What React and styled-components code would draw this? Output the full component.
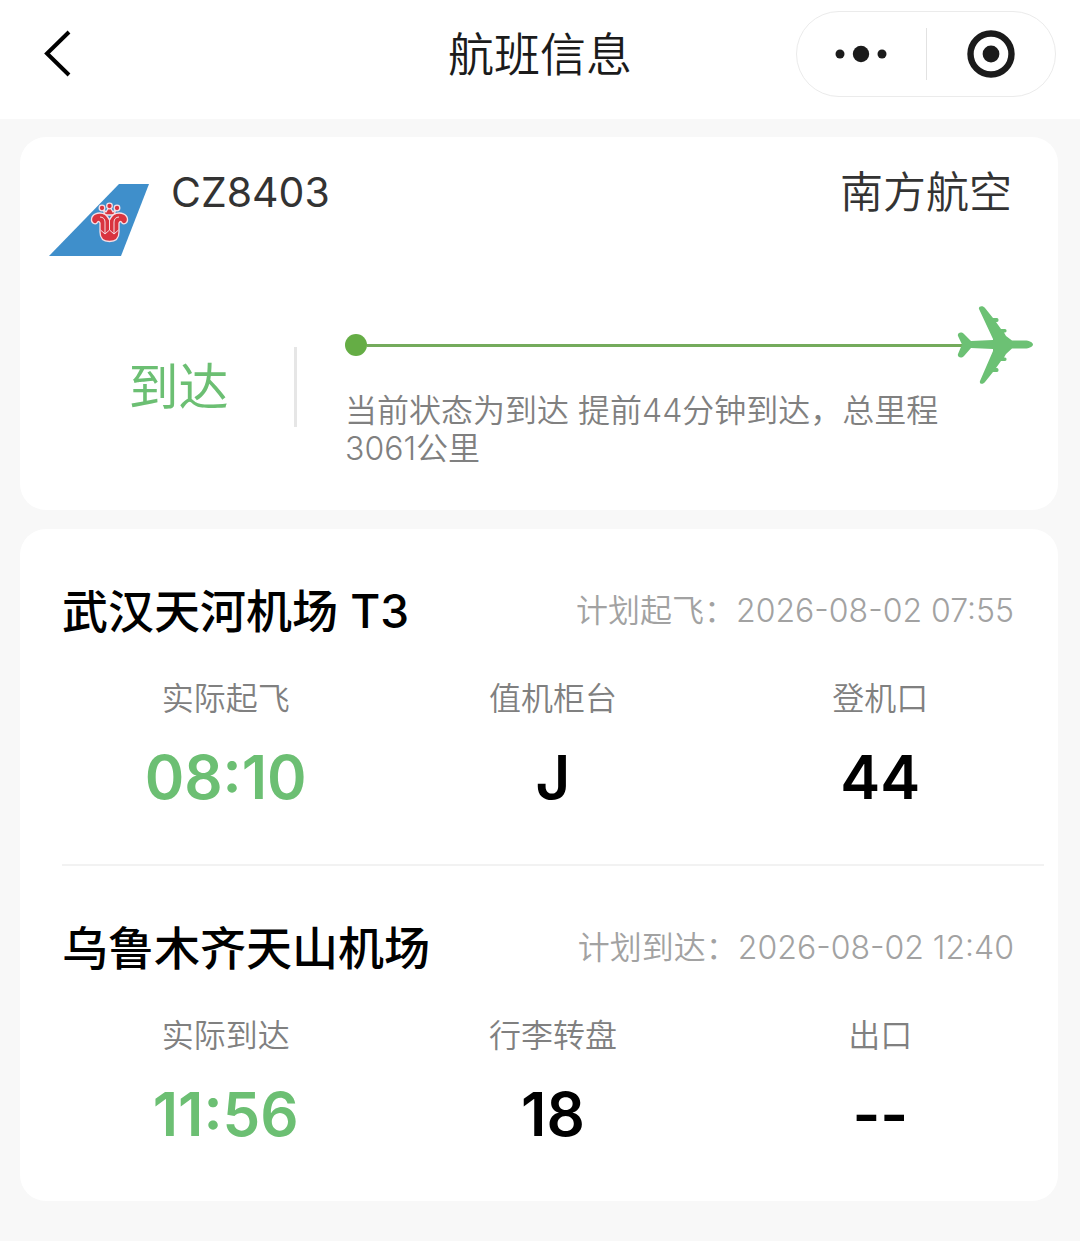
import styled, { createGlobalStyle } from "styled-components";

const trechos = [
    {
        aeroporto: "武汉天河机场 T3",
        plano: "计划起飞：",
        horario: "2026-08-02 07:55",
        dados: [
            { nome: "实际起飞", valor: "08:10", verde: true },
            { nome: "值机柜台", valor: "J" },
            { nome: "登机口", valor: "44" },
        ],
    },
    {
        aeroporto: "乌鲁木齐天山机场",
        plano: "计划到达：",
        horario: "2026-08-02 12:40",
        dados: [
            { nome: "实际到达", valor: "11:56", verde: true },
            { nome: "行李转盘", valor: "18" },
            { nome: "出口", valor: "--" },
        ],
    },
];

export default function App() {
    return (
        <>
            <GlobalStyle />
            <Header>
                <Voltar aria-label="返回">
                    <svg width="30" height="50" viewBox="0 0 30 50" fill="none" stroke="#000" strokeWidth="4">
                        <path d="M27 3L5 24.500L27 46" />
                    </svg>
                </Voltar>
                <Titulo>航班信息</Titulo>
                <Capsula>
                    <BotaoCapsula aria-label="更多">
                        <svg width="52" height="18" viewBox="0 0 52 18" fill="#1b1b1b">
                            <circle cx="5" cy="9" r="4.500" />
                            <circle cx="26" cy="9" r="8.200" />
                            <circle cx="47" cy="9" r="4.500" />
                        </svg>
                    </BotaoCapsula>
                    <Traco />
                    <BotaoCapsula aria-label="关闭">
                        <svg width="48" height="48" viewBox="0 0 48 48">
                            <circle cx="24" cy="24" r="20.500" fill="none" stroke="#1b1b1b" strokeWidth="6.400" />
                            <circle cx="24" cy="24" r="8.400" fill="#1b1b1b" />
                        </svg>
                    </BotaoCapsula>
                </Capsula>
            </Header>
            <Conteudo>
                <CartaoVoo>
                    <Companhia>
                        <Logo />
                        <Numero>CZ8403</Numero>
                        <Nome>南方航空</Nome>
                    </Companhia>
                    <Situacao>
                        <Estado>到达</Estado>
                        <Progresso>
                            <Rota>
                                <Ponto />
                                <Linha />
                                <Aviao />
                            </Rota>
                            <Resumo>当前状态为到达 提前44分钟到达，总里程3061公里</Resumo>
                        </Progresso>
                    </Situacao>
                </CartaoVoo>
                <CartaoTrechos>
                    {trechos.map((t) => (
                        <Trecho key={t.aeroporto}>
                            <Topo>
                                <Aeroporto>{t.aeroporto}</Aeroporto>
                                <Plano>{t.plano}<time>{t.horario}</time></Plano>
                            </Topo>
                            <Dados>
                                {t.dados.map((d) => (
                                    <Dado key={d.nome}>
                                        <Rotulo>{d.nome}</Rotulo>
                                        <Valor $verde={d.verde}>{d.valor}</Valor>
                                    </Dado>
                                ))}
                            </Dados>
                        </Trecho>
                    ))}
                </CartaoTrechos>
            </Conteudo>
        </>
    );
}

function Logo() {
    return (
        <svg width="100" height="74" viewBox="0 0 100 74" role="img" aria-label="南方航空">
            <path d="M70 1H100L72 73H0Z" fill="#3f8fcb" />
            <g fill="#d9343f" stroke="#f6dfe6" strokeWidth="1.300" strokeLinejoin="round">
                <path d="M54 26L56 32H65L67 26L64 29L60.500 23L57 29Z" />
                <circle cx="53" cy="25" r="2.800" />
                <circle cx="60.500" cy="23" r="2.800" />
                <circle cx="68" cy="25" r="2.800" />
                <path d="M51 49V40C50 38 49 38 48 40C46 42 42 40 42.500 36C43 31 49 29 54 30.500C57 31 59 34 60.500 37C62 34 64 31 67 30.500C72 29 78 31 78.500 36C79 40 75 42 73 40C72 38 71 38 70 40V49C70 55 67 58.500 60.500 58.500C54 58.500 51 55 51 49Z" />
                <path d="M51.500 47L56 51L60.500 47L65 51L69.500 47M56 50V39C56 36 54 34 51 34M60.500 47V37M65 50V39C65 36 67 34 70 34" fill="none" strokeWidth="1" />
            </g>
        </svg>
    );
}

function Aviao() {
    return (
        <svg width="78" height="80" viewBox="0 0 78 80" fill="#6cc174" aria-hidden="true">
            <path d="M23 4C22 1 27 0 29 3L37 13H41C43 13 43 17 41 17H40L45 24H49C51 24 51 27.500 49 27.500H48L50 31L56 35.500H69C73 35.500 77 37.500 77 39.500C77 41.500 73 43.500 69 43.500H56L50 49L48 52.500H49C51 52.500 51 56 49 56H45L40 63H41C43 63 43 67 41 67H37L29 77C27 80 23 79 24 76L37 46V44L15 43L8 51C5 54 1 52 2 49L6 39.500L2 31C1 28 5 26 8 29L15 36L37 35V34Z" />
        </svg>
    );
}

const GlobalStyle = createGlobalStyle`
    * {
        box-sizing: border-box;
        margin: 0;
        padding: 0;
    }

    body {
        background-color: #f8f8f8;
        color: #000;
        font-family: Inter, "Noto Sans CJK SC", sans-serif;
    }

    button {
        border: none;
        background: none;
        cursor: pointer;
    }

    svg {
        display: block;
        flex-shrink: 0;
    }
`

const Header = styled.header`
    display: grid;
    grid-template-columns: 1fr auto 1fr;
    align-items: center;
    height: 119px;
    padding: 0 24px 12px 42px;
    background-color: #fff;
`

const Voltar = styled.button`
    justify-self: start;
`

const Titulo = styled.h1`
    padding-right: 18px;
    font-size: 46px;
    line-height: 64px;
    font-weight: 350;
    color: #1b1b1b;
`

const Capsula = styled.div`
    display: flex;
    align-items: center;
    justify-self: end;
    width: 260px;
    height: 86px;
    border: 1px solid #ebebeb;
    border-radius: 43px;
`

const BotaoCapsula = styled.button`
    display: flex;
    flex: 1;
    align-items: center;
    justify-content: center;
    height: 100%;
`

const Traco = styled.span`
    width: 1px;
    height: 52px;
    background-color: #e2e2e2;
`

const Conteudo = styled.main`
    display: flex;
    flex-direction: column;
    gap: 19px;
    padding: 18px 22px 40px 20px;
`

const Cartao = styled.section`
    border-radius: 26px;
    background-color: #fff;
`

const CartaoVoo = styled(Cartao)`
    padding: 24px 24px 42px 29px;
`

const Companhia = styled.div`
    display: flex;
    align-items: flex-start;
    gap: 22px;
    padding-right: 22px;

    svg {
        margin-top: 22px;
    }
`

const Numero = styled.h2`
    font-size: 41px;
    line-height: 62px;
    font-weight: 400;
    color: #333;
`

const Nome = styled.p`
    margin-left: auto;
    font-size: 43px;
    line-height: 62px;
    font-weight: 350;
    color: #333;
`

const Situacao = styled.div`
    display: flex;
    align-items: center;
    margin-top: 48px;
`

const Estado = styled.p`
    width: 248px;
    padding-left: 14px;
    border-right: 3px solid #e6e6e6;
    font-size: 50px;
    line-height: 80px;
    text-align: center;
    color: #6cbf73;
`

const Progresso = styled.div`
    flex: 1;
    padding-left: 48px;
`

const Rota = styled.div`
    display: flex;
    align-items: center;
`

const Ponto = styled.span`
    width: 22px;
    height: 22px;
    border-radius: 50%;
    background-color: #65ad45;
`

const Linha = styled.span`
    flex: 1;
    height: 3px;
    margin-right: -6px;
    background-color: #74ab5c;
`

const Resumo = styled.p`
    padding: 7px 60px 0 0;
    font-size: 32px;
    line-height: 38px;
    font-weight: 350;
    color: #808080;
`

const CartaoTrechos = styled(Cartao)`
    padding: 0 14px 0 42px;
`

const Trecho = styled.article`
    padding: 50px 0 51px;

    & + & {
        border-top: 2px solid #f2f2f2;
    }
`

const Topo = styled.div`
    display: flex;
    align-items: center;
    justify-content: space-between;
    padding-right: 30px;
`

const Aeroporto = styled.h2`
    font-size: 46px;
    line-height: 64px;
    font-weight: 500;
`

const Plano = styled.p`
    font-size: 32px;
    line-height: 44px;
    font-weight: 350;
    color: #a2a2a2;
`

const Dados = styled.dl`
    display: grid;
    grid-template-columns: repeat(3, 1fr);
    margin-top: 34px;
    text-align: center;
`

const Dado = styled.div`
    display: flex;
    flex-direction: column;
    gap: 20px;
`

const Rotulo = styled.dt`
    font-size: 32px;
    line-height: 44px;
    font-weight: 350;
    color: #808080;
`

const Valor = styled.dd`
    font-size: 60px;
    line-height: 72px;
    font-weight: 600;
    color: ${(props) => (props.$verde ? "#6cbf73" : "#000")};
`
